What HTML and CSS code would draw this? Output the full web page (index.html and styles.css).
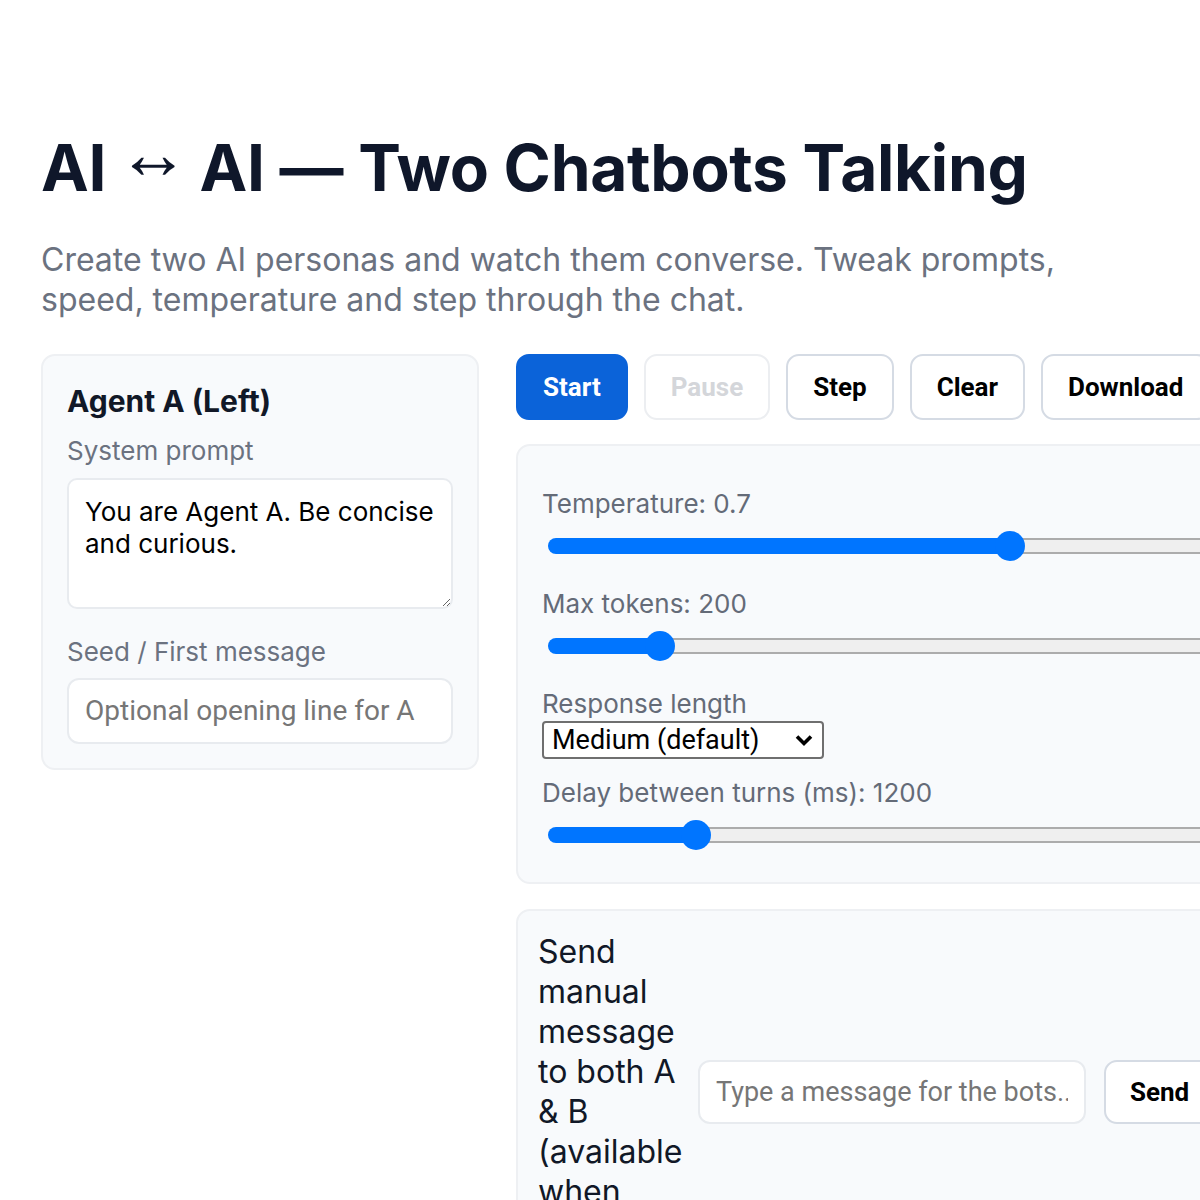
FILE: index.html
```html
<!DOCTYPE html>
<html lang="en">
<head>
<meta charset="utf-8">
<title>AI ↔ AI — Two Chatbots Talking</title>
<link rel="stylesheet" href="styles.css">
</head>
<body>
<div class="page">
  <header class="header">
    <h1 class="title">AI <span class="arrow">↔</span> AI — Two Chatbots Talking</h1>
    <p class="subtitle">Create two AI personas and watch them converse. Tweak prompts, speed, temperature and step through the chat.</p>
  </header>

  <main class="layout">
    <section class="card agent">
      <h2 class="agent-title">Agent A (Left)</h2>
      <label class="field-label" for="sysA">System prompt</label>
      <textarea id="sysA" class="textarea">You are Agent A. Be concise and curious.</textarea>
      <label class="field-label seed-label" for="seedA">Seed / First message</label>
      <input id="seedA" class="text-input" type="text" placeholder="Optional opening line for A">
    </section>

    <section class="center">
      <div class="toolbar">
        <button class="btn btn-primary">Start</button>
        <button class="btn" disabled>Pause</button>
        <button class="btn">Step</button>
        <button class="btn">Clear</button>
        <button class="btn">Download</button>
      </div>

      <div class="card settings">
        <label class="set-label">Temperature: 0.7</label>
        <input class="range" type="range" min="0" max="1" step="0.1" value="0.7" style="--f:0.7">

        <label class="set-label">Max tokens: 200</label>
        <input class="range" type="range" min="50" max="1040" value="200" style="--f:0.1515">

        <label class="set-label">Response length</label>
        <select class="select">
          <option>Medium (default)</option>
          <option>Short</option>
          <option>Long</option>
        </select>

        <label class="set-label delay-label">Delay between turns (ms): 1200</label>
        <input class="range" type="range" min="200" max="5000" value="1200" style="--f:0.2083">
      </div>

      <div class="card manual">
        <label class="manual-label" for="manual">Send manual message to both A &amp; B (available when paused)</label>
        <input id="manual" class="text-input manual-input" type="text" placeholder="Type a message for the bots...">
        <button class="btn send-btn">Send</button>
      </div>
    </section>
  </main>
</div>
</body>
</html>
```

FILE: styles.css
```css
html, body {
  margin: 0;
  padding: 0;
  background: #ffffff;
  overflow-x: hidden;
}

body {
  font-family: Inter, "Noto Sans", sans-serif;
  color: #111827;
}

.page {
  padding: 130px 0 40px 41px;
  width: 1400px;
}

.title {
  margin: 0;
  font-size: 64px;
  line-height: 1.2;
  font-weight: 700;
  letter-spacing: -0.3px;
  color: #0f172a;
}

.arrow {
  font-family: "Liberation Sans", sans-serif;
  font-size: 72px;
  line-height: 0;
  font-weight: 700;
  vertical-align: 13px;
  margin: 0 -4px;
}

.subtitle {
  margin: 33px 0 0;
  width: 1040px;
  font-size: 32px;
  line-height: 40px;
  color: #6b7280;
}

.layout {
  margin-top: 34px;
  display: grid;
  grid-template-columns: 438px 734px;
  column-gap: 37px;
  align-items: start;
}

.card {
  background: #f8fafc;
  border: 2px solid #eef0f3;
  border-radius: 14px;
  box-sizing: border-box;
}

.agent {
  padding: 27px 24px 24px;
  display: flex;
  flex-direction: column;
}

.agent-title {
  margin: 0;
  font-size: 30px;
  line-height: 36px;
  font-weight: 700;
  color: #111827;
}

.field-label {
  margin-top: 16px;
  font-size: 26px;
  line-height: 32px;
  color: #6b7280;
}

.seed-label {
  margin-top: 27px;
}

.textarea {
  margin-top: 11px;
  height: 131px;
  box-sizing: border-box;
  border: 2px solid #e8ebef;
  border-radius: 10px;
  background: #ffffff;
  padding: 16px 12px 14px 16px;
  font-family: Inter, sans-serif;
  font-size: 26px;
  line-height: 32px;
  color: #000000;
  resize: vertical;
}

.text-input {
  box-sizing: border-box;
  height: 66px;
  border: 2px solid #e8ebef;
  border-radius: 12px;
  background: #ffffff;
  padding: 0 16px;
  font-family: Roboto, sans-serif;
  font-size: 28px;
  color: #000;
}

.agent .text-input {
  margin-top: 10px;
}

.text-input::placeholder {
  color: #767676;
}

.center {
  display: flex;
  flex-direction: column;
}

.toolbar {
  display: flex;
  gap: 16px;
}

.btn {
  height: 66px;
  box-sizing: border-box;
  padding: 0 25px;
  border: 2px solid #d5dbe4;
  border-radius: 13px;
  background: #ffffff;
  color: #000000;
  font-family: Roboto, sans-serif;
  font-weight: 700;
  font-size: 26px;
  white-space: nowrap;
}

.btn-primary {
  background: #0b63d9;
  border-color: #0b63d9;
  color: #ffffff;
}

.btn:disabled {
  border-color: #eceef1;
  color: #d4d6da;
}

.settings {
  margin-top: 24px;
  padding: 42px 24px 32px;
  display: flex;
  flex-direction: column;
}

.set-label {
  font-family: Inter, sans-serif;
  font-size: 26px;
  line-height: 32px;
  color: #646b78;
}

.range {
  -webkit-appearance: none;
  appearance: none;
  margin: 11px 0 27px 6px;
  width: 669px;
  height: 30px;
  background: transparent;
}

.range::-webkit-slider-runnable-track {
  height: 16px;
  border-radius: 8px;
  background:
    linear-gradient(to right, #0075ff calc(15px + var(--f) * (100% - 30px)), transparent calc(15px + var(--f) * (100% - 30px))),
    linear-gradient(to bottom, #acacac 0 2px, #efefef 2px calc(100% - 2px), #acacac calc(100% - 2px));
}

.range::-webkit-slider-thumb {
  -webkit-appearance: none;
  appearance: none;
  width: 30px;
  height: 30px;
  margin-top: -7px;
  border-radius: 50%;
  background: #0075ff;
  border: none;
}

.range:last-child {
  margin-bottom: 0;
}

.select {
  -webkit-appearance: none;
  appearance: none;
  margin-top: 1px;
  width: 282px;
  height: 38px;
  box-sizing: border-box;
  border: 2px solid #6f6f6f;
  border-radius: 4px;
  padding: 0 36px 0 8px;
  font-family: Roboto, sans-serif;
  font-size: 27px;
  color: #000;
  background: #ffffff url("data:image/svg+xml;utf8,<svg xmlns='http://www.w3.org/2000/svg' width='20' height='14' viewBox='0 0 20 14'><path d='M3 3.5 L10 10.5 L17 3.5' fill='none' stroke='black' stroke-width='3.6'/></svg>") no-repeat right 8px center;
}

.delay-label {
  margin-top: 18px;
}

.manual {
  margin-top: 25px;
  padding: 21px 22px 40px 20px;
  display: flex;
  align-items: center;
  gap: 18px;
}

.manual-label {
  width: 142px;
  flex-shrink: 0;
  font-size: 32px;
  line-height: 40px;
  color: #111827;
}

.manual-input {
  width: 388px;
  height: 64px;
  flex-shrink: 0;
  padding: 0 16px;
  font-size: 27px;
}

.send-btn {
  height: 64px;
  padding: 0 24px;
}
```
